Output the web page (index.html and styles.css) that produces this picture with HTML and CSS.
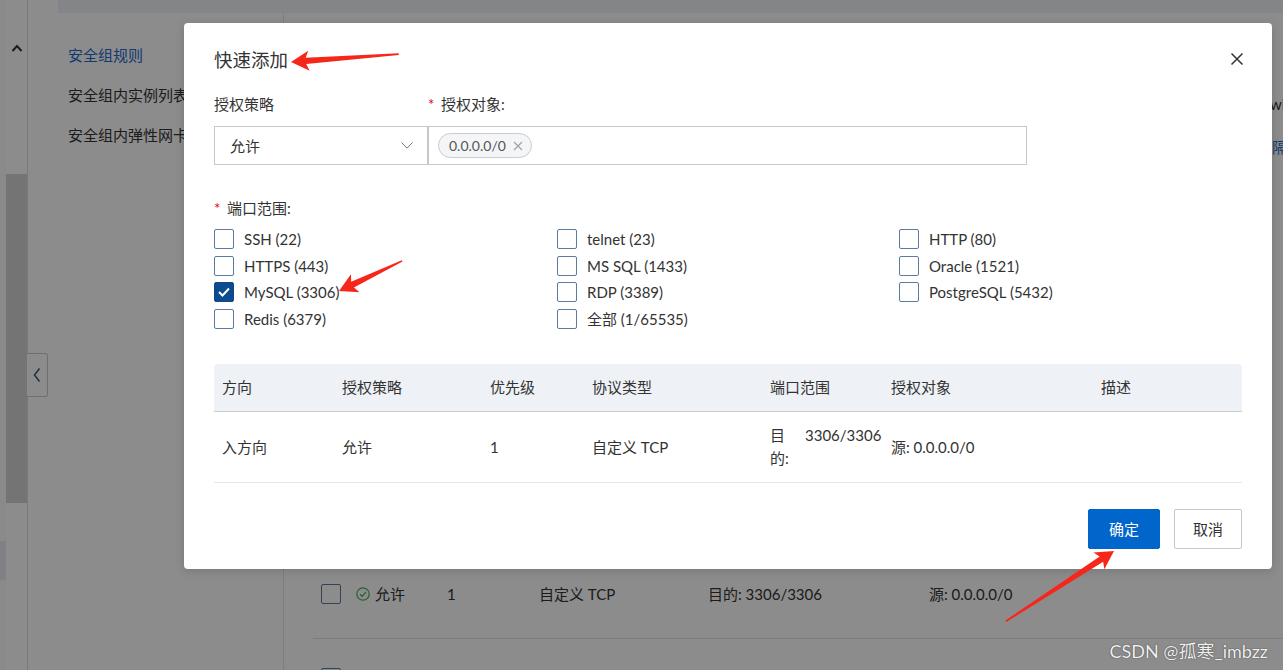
FILE: index.html
```html
<!DOCTYPE html>
<html lang="zh-CN">
<head>
<meta charset="utf-8">
<title>快速添加</title>
<link rel="stylesheet" href="styles.css">
</head>
<body>
<div class="page">
  <aside class="rail">
    <div class="rail-edge"><div class="rail-mark"></div></div>
    <div class="rail-track">
      <div class="rail-up"><svg width="12" height="8" viewBox="0 0 12 8"><path d="M1.5 7 L6 2 L10.5 7" fill="none" stroke="#333" stroke-width="2"/></svg></div>
      <div class="rail-thumb"></div>
    </div>
    <div class="collapse"><svg width="8" height="16" viewBox="0 0 8 16"><path d="M6.5 1.5 L1.5 8 L6.5 14.5" fill="none" stroke="#4a5d78" stroke-width="1.6"/></svg></div>
  </aside>
  <div class="body">
    <div class="band"></div>
    <div class="columns">
      <nav class="sidebar">
        <div class="nav-item active">安全组规则</div>
        <div class="nav-item">安全组内实例列表</div>
        <div class="nav-item">安全组内弹性网卡</div>
      </nav>
      <main class="main">
        <div class="info">
          <div class="info-line">wi</div>
          <div class="info-line link">隔</div>
        </div>
        <div class="rule-row">
          <span class="cb"></span>
          <span class="cell status"><svg width="14" height="14" viewBox="0 0 14 14"><circle cx="7" cy="7" r="6.2" fill="none" stroke="#4caf50" stroke-width="1.2"/><path d="M4 7.2 L6.2 9.3 L10 5" fill="none" stroke="#4caf50" stroke-width="1.2"/></svg>允许</span>
          <span class="cell prio">1</span>
          <span class="cell proto">自定义 TCP</span>
          <span class="cell port">目的: 3306/3306</span>
          <span class="cell src">源: 0.0.0.0/0</span>
        </div>
        <div class="rule-row next"><span class="cb"></span></div>
      </main>
    </div>
  </div>
</div>

<div class="mask"></div>

<div class="dialog">
  <button class="close" type="button"><svg width="14" height="14" viewBox="0 0 14 14"><path d="M1.5 1.5 L12.5 12.5 M12.5 1.5 L1.5 12.5" stroke="#333" stroke-width="1.5"/></svg></button>
  <h2 class="title">快速添加</h2>
  <div class="form-row">
    <div class="field f-policy">
      <label class="label">授权策略</label>
      <div class="select"><span>允许</span><svg width="12" height="7" viewBox="0 0 12 7"><path d="M0.5 0.5 L6 6.2 L11.5 0.5" fill="none" stroke="#777" stroke-width="1"/></svg></div>
    </div>
    <div class="field f-target">
      <label class="label"><i class="req">*</i>授权对象:</label>
      <div class="input"><span class="tag">0.0.0.0/0<svg width="10" height="10" viewBox="0 0 10 10"><path d="M1 1 L9 9 M9 1 L1 9" stroke="#a0a0a0" stroke-width="1.2"/></svg></span></div>
    </div>
  </div>
  <div class="label ports-label"><i class="req">*</i>端口范围:</div>
  <div class="ports">
    <label class="opt"><span class="cb"></span>SSH (22)</label>
    <label class="opt"><span class="cb"></span>telnet (23)</label>
    <label class="opt"><span class="cb"></span>HTTP (80)</label>
    <label class="opt"><span class="cb"></span>HTTPS (443)</label>
    <label class="opt"><span class="cb"></span>MS SQL (1433)</label>
    <label class="opt"><span class="cb"></span>Oracle (1521)</label>
    <label class="opt"><span class="cb on"><svg width="12" height="10" viewBox="0 0 12 10"><path d="M1 5 L4.5 8.5 L11 1.5" fill="none" stroke="#fff" stroke-width="2"/></svg></span>MySQL (3306)</label>
    <label class="opt"><span class="cb"></span>RDP (3389)</label>
    <label class="opt"><span class="cb"></span>PostgreSQL (5432)</label>
    <label class="opt"><span class="cb"></span>Redis (6379)</label>
    <label class="opt"><span class="cb"></span>全部 (1/65535)</label>
  </div>
  <table class="tbl">
    <thead>
      <tr>
        <th class="c1">方向</th>
        <th class="c2">授权策略</th>
        <th class="c3">优先级</th>
        <th class="c4">协议类型</th>
        <th class="c5">端口范围</th>
        <th class="c6">授权对象</th>
        <th class="c7">描述</th>
      </tr>
    </thead>
    <tbody>
      <tr>
        <td>入方向</td>
        <td>允许</td>
        <td>1</td>
        <td>自定义 TCP</td>
        <td><div class="range"><span class="range-k">目的:</span><span class="range-v">3306/3306</span></div></td>
        <td>源: 0.0.0.0/0</td>
        <td></td>
      </tr>
    </tbody>
  </table>
  <div class="actions">
    <button class="btn primary" type="button">确定</button>
    <button class="btn" type="button">取消</button>
  </div>
</div>

<svg class="arrows" width="1283" height="670" viewBox="0 0 1283 670">
  <g transform="translate(291 62) rotate(-4.2)"><polygon points="0,0 18,-10 15,-3.2 108,-0.8 108,0.8 15,3.2 18,10" fill="#f7261b"/></g>
  <g transform="translate(339 291) rotate(-25.5)"><polygon points="0,0 18,-10 15,-3.2 70,-0.8 70,0.8 15,3.2 18,10" fill="#f7261b"/></g>
  <g transform="translate(1114 551) rotate(147)"><polygon points="0,0 18,-10 15,-3.2 129,-0.8 129,0.8 15,3.2 18,10" fill="#f7261b"/></g>
</svg>

<div class="watermark">CSDN @孤寒_imbzz</div>
</body>
</html>
```
FILE: styles.css
```css
* { box-sizing: border-box; margin: 0; padding: 0; }
html, body { width: 1283px; height: 670px; overflow: hidden; }
body {
  position: relative;
  background: #fff;
  color: #333;
  font-family: Lato, "Noto Sans CJK SC", sans-serif;
  font-size: 15px;
  line-height: 20px;
}

/* ---------- background page ---------- */
.page { display: flex; height: 670px; }
.rail { position: relative; flex: none; width: 28px; display: flex; border-right: 1px solid #dcdcdc; }
.rail-edge { width: 6px; background: #fbfbfb; }
.rail-mark { margin-top: 541px; height: 39px; background: #e9ecf3; }
.rail-track { width: 21px; background: #fff; display: flex; flex-direction: column; }
.rail-up { margin-top: 38px; height: 20px; display: flex; align-items: center; justify-content: center; }
.rail-thumb { margin-top: 116px; height: 329px; background: #d4d4d4; }
.collapse {
  position: absolute; left: 27px; top: 353px; width: 21px; height: 44px;
  border: 1px solid #c6cad2; border-left: none; border-radius: 0 3px 3px 0;
  background: #fff; display: flex; align-items: center; justify-content: center;
}

.body { flex: 1; min-width: 0; display: flex; flex-direction: column; }
.band { flex: none; height: 13px; margin-left: 30px; background: #f1f3f8; }
.columns { flex: 1; display: flex; }
.sidebar { flex: none; width: 255px; padding-top: 22px; }
.nav-item { height: 40px; line-height: 40px; padding-left: 40px; white-space: nowrap; color: #333; }
.nav-item.active { color: #1f6bc9; }
.main { flex: 1; min-width: 0; border-left: 1px solid #e6e6e6; overflow: hidden; }
.info { margin-top: 81px; padding-left: 986px; }
.info-line { height: 20px; white-space: nowrap; }
.info-line.link { margin-top: 23px; padding-left: 2px; color: #1f6bc9; }

.rule-row {
  margin-top: 418px; margin-left: 29px; height: 64px;
  padding: 9px 0 0 8px; border-bottom: 1px solid #e3e3e3;
  display: flex; align-items: flex-start; white-space: nowrap;
}
.rule-row.next { margin-top: 0; padding-top: 29px; border-bottom: none; }
.cell { height: 20px; display: flex; align-items: center; }
.status { margin-left: 15px; width: 91px; gap: 5px; }
.prio { width: 92px; }
.proto { width: 169px; }
.port { width: 221px; }

/* ---------- modal ---------- */
.mask { position: absolute; inset: 0; background: rgba(0, 0, 0, .45); }
.dialog {
  position: absolute; left: 184px; top: 23px; width: 1088px; height: 546px;
  background: #fff; border-radius: 4px; padding: 24px 30px 20px;
  display: flex; flex-direction: column;
  box-shadow: 0 2px 10px rgba(0, 0, 0, .15);
}
.close {
  position: absolute; left: 1046px; top: 29px; width: 14px; height: 14px;
  border: none; background: none; display: flex;
}
.title { font-size: 18.5px; line-height: 26px; font-weight: 400; color: #333; }

.form-row { display: flex; margin-top: 21px; }
.f-policy { width: 214px; flex: none; }
.f-target { width: 599px; flex: none; }
.label { display: block; height: 20px; line-height: 20px; white-space: nowrap; }
.req { display: inline-block; width: 13px; color: #d9001b; font-style: normal; }
.select {
  margin-top: 12px; height: 39px; border: 1px solid #c4c8cf;
  display: flex; align-items: center; justify-content: space-between;
  padding: 0 14px 0 15px;
}
.input { margin-top: 12px; height: 39px; border: 1px solid #c4c8cf; display: flex; align-items: center; padding-left: 9px; }
.tag {
  height: 25px; display: flex; align-items: center; gap: 7px;
  padding: 0 8px 0 10px; border: 1px solid #c9ccd2; border-radius: 13px;
  background: #f4f5f7; color: #555; font-size: 14px;
}

.ports-label { margin-top: 33px; }
.ports {
  margin-top: 7.7px; display: grid;
  grid-template-columns: 343px 342px 1fr; grid-auto-rows: 26.67px;
}
.opt { display: flex; align-items: center; gap: 10px; white-space: nowrap; }
.cb {
  flex: none; width: 20px; height: 20px; border: 1.5px solid #5b7ba0; border-radius: 2px;
  display: flex; align-items: center; justify-content: center; background: #fff;
}
.cb.on { background: #0d4a8e; border-color: #0d4a8e; }

.tbl { width: 1028px; margin-top: 31.6px; border-collapse: separate; border-spacing: 0; table-layout: fixed; }
.tbl th {
  height: 48px; background: #eef1f6; border-bottom: 1px solid #c9cdd4;
  text-align: left; font-weight: 400; padding: 0 8px; white-space: nowrap;
}
.tbl th:first-child { border-top-left-radius: 4px; }
.tbl th:last-child { border-top-right-radius: 4px; }
.tbl td { height: 71px; border-bottom: 1px solid #e6e6e6; padding: 0 8px; vertical-align: middle; white-space: nowrap; }
.c1 { width: 120px; }
.c2 { width: 148px; }
.c3 { width: 102px; }
.c4 { width: 178px; }
.c5 { width: 121px; }
.c6 { width: 210px; }
.c7 { width: 149px; }
.range { display: flex; align-items: flex-start; line-height: 23px; }
.range-k { flex: none; width: 28px; margin-right: 7px; white-space: normal; }
.range-v { flex: none; }

.actions { margin-top: 26px; display: flex; justify-content: flex-end; gap: 14px; }
.btn {
  height: 40px; width: 68px; border: 1px solid #c8c8c8; border-radius: 2px;
  background: #fff; color: #333; font: inherit;
}
.btn.primary { width: 72px; background: #0066cc; border-color: #0066cc; color: #fff; }

.arrows { position: absolute; left: 0; top: 0; pointer-events: none; }
.watermark {
  position: absolute; right: 15px; top: 641px; font-size: 18px; line-height: 20px;
  color: #f0f0f0; text-shadow: 0 0 1px #444, 0 0 1px #444; white-space: nowrap;
}
```
